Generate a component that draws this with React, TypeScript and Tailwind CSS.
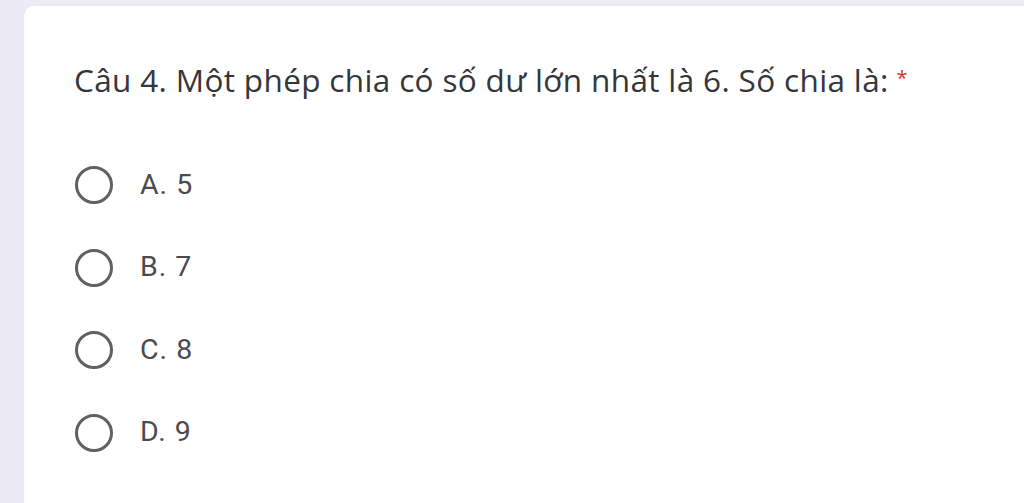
import React from "react";

const options = ["A. 5", "B. 7", "C. 8", "D. 9"];

export default function App() {
  return (
    <div className="w-[1024px] h-[503px] overflow-hidden bg-[#ecebf5] pl-[24px] pt-[6px]" style={{ fontFamily: "Roboto, 'Open Sans', sans-serif" }}>
      <div className="bg-white rounded-tl-[10px] h-[600px] w-[1100px] pl-[50px] pt-[54px]">
        <div className="text-[31.5px] leading-[40px] text-[#35363a] tracking-[0.35px] whitespace-nowrap" style={{ fontFamily: "'Open Sans', Roboto, sans-serif" }}>
          Câu 4. Một phép chia có số dư lớn nhất là 6. Số chia là:<span className="text-[#d93025] text-[20px] align-top ml-[8px] relative top-[-2px]">*</span>
        </div>
        <div className="mt-[66px] flex flex-col gap-[44.5px]">
          {options.map((o) => (
            <div key={o} className="flex items-center h-[38px] pl-[1px]">
              <div className="w-[38px] h-[38px] rounded-full border-[3.5px] border-[#5f6163]" />
              <span className="ml-[27px] text-[28.5px] tracking-[1px] text-[#4a4b4e]">{o}</span>
            </div>
          ))}
        </div>
      </div>
    </div>
  );
}
